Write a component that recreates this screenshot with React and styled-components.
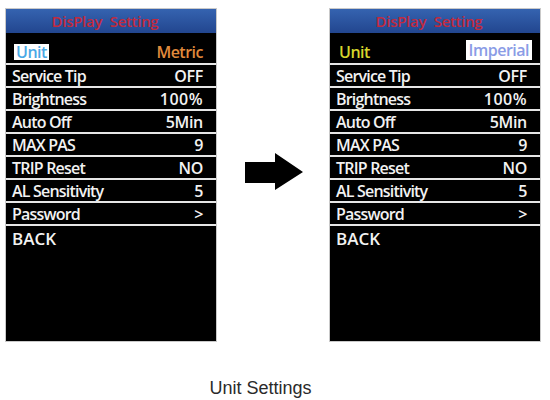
import styled, { createGlobalStyle } from "styled-components"

const GlobalStyle = createGlobalStyle`
  html, body {
    margin: 0;
    padding: 0;
    background: #ffffff;
  }
  body {
    width: 550px;
    height: 400px;
    overflow: hidden;
    font-family: "Open Sans", "Liberation Sans", sans-serif;
  }
`

const Page = styled.div`
  width: 550px;
  height: 400px;
  display: flex;
  flex-direction: column;
`

const Stage = styled.div`
  display: flex;
  align-items: flex-start;
  padding: 8px 0 0 5px;
`

// screen of the display
const Screen = styled.div`
  width: 212px;
  height: 334px;
  box-sizing: border-box;
  border: 1px solid #c9c9c9;
  background: #e6e6e6;
  display: flex;
  flex-direction: column;
`

const Header = styled.div`
  height: 24px;
  background: linear-gradient(#3563b0, #22468f);
  color: #c22a3e;
  font-size: 15px;
  font-weight: 600;
  letter-spacing: -0.3px;
  word-spacing: 4px;
  display: flex;
  align-items: center;
  justify-content: center;
  padding-right: 12px;
  line-height: 1;
`

const Row = styled.div`
  height: ${(p) => p.$h || 21}px;
  margin-top: ${(p) => (p.$first ? 0 : 2)}px;
  background: #000;
  color: #f2f2f2;
  display: flex;
  align-items: ${(p) => (p.$first ? "flex-end" : "center")};
  justify-content: space-between;
  padding: 0 13px 0 6px;
  padding-bottom: ${(p) => (p.$first ? 3 : 0)}px;
  box-sizing: border-box;
  font-size: 16px;
  font-weight: 600;
  letter-spacing: -0.8px;
  line-height: 1;
`

const UnitRow = styled(Row)`
  padding-left: ${(p) => p.$pl}px;
  padding-right: ${(p) => p.$pr}px;
`

const Back = styled.div`
  flex: 1;
  margin-top: 2px;
  background: #000;
  color: #f2f2f2;
  font-size: 17px;
  font-weight: 600;
  padding: 4px 6px;
  line-height: 1;
`

const Tag = styled.span`
  color: ${(p) => p.$color};
  background: ${(p) => (p.$boxed ? "#ffffff" : "transparent")};
  padding: ${(p) => (p.$boxed ? p.$pad : "0")};
  letter-spacing: -0.5px;
`

const Value = styled.span`
  letter-spacing: ${(p) => p.$ls || "-0.3px"};
`

const ArrowBox = styled.div`
  margin: 145px 26px 0 28px;
  width: 58px;
  height: 37px;
`

const Caption = styled.div`
  margin-top: 36px;
  font-family: "Liberation Sans", Arial, sans-serif;
  font-size: 18px;
  color: #2a2a2a;
  text-align: center;
  padding-right: 29px;
`

const rows = [
  ["Service Tip", "OFF"],
  ["Brightness", "100%", "0.5px"],
  ["Auto Off", "5Min"],
  ["MAX PAS", "9"],
  ["TRIP Reset", "NO"],
  ["AL Sensitivity", "5"],
  ["Password", ">"],
]

function Display({ unit }) {
  return (
    <Screen>
      <Header>DisPlay Setting</Header>
      {unit}
      {rows.map(([label, val, ls]) => (
        <Row key={label}>
          <span>{label}</span>
          <Value $ls={ls}>{val}</Value>
        </Row>
      ))}
      <Back>BACK</Back>
    </Screen>
  )
}

function Arrow() {
  return (
    <ArrowBox>
      <svg width="58" height="37" viewBox="0 0 58 37">
        <polygon points="0,9 30,9 30,0 58,19 30,37 30,30 0,30" fill="#000" />
      </svg>
    </ArrowBox>
  )
}

export default function App() {
  return (
    <Page>
      <GlobalStyle />
      <Stage>
        <Display
          unit={
            <UnitRow $first $h={30} $pl={8} $pr={13}>
              <Tag $boxed $color="#4aa9e6" $pad="0 2px">Unit</Tag>
              <Tag $color="#e08a3c">Metric</Tag>
            </UnitRow>
          }
        />
        <Arrow />
        <Display
          unit={
            <UnitRow $first $h={30} $pl={9} $pr={8}>
              <Tag $color="#d6d62c">Unit</Tag>
              <Tag $boxed $color="#8a9ce6" $pad="2px 3px">Imperial</Tag>
            </UnitRow>
          }
        />
      </Stage>
      <Caption>Unit Settings</Caption>
    </Page>
  )
}
